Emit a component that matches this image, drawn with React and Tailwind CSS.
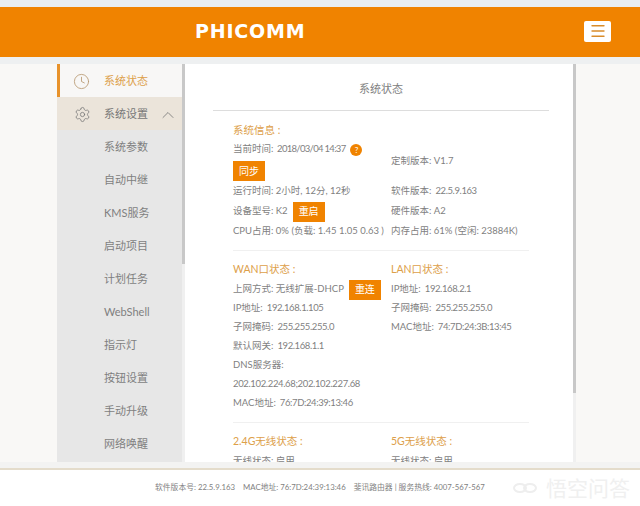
import React from 'react';
import { Clock, Settings, ChevronUp, Menu } from 'lucide-react';

const font = { fontFamily: 'Lato, "Noto Sans CJK SC", sans-serif' };

const subItems = ['系统参数', '自动中继', 'KMS服务', '启动项目', '计划任务', 'WebShell', '指示灯', '按钮设置', '手动升级', '网络唤醒'];

const OrangeButton = ({ label, className = '' }) => (
  <span className={`inline-flex items-center justify-center w-[32px] h-[20px] bg-[#f08300] text-white text-[10px] shrink-0 ${className}`}>{label}</span>
);

const Row = ({ children, className = '' }) => (
  <div className={`h-[19px] flex items-center whitespace-pre ${className}`}>{children}</div>
);

// numbers in the reference run tighter than the labels
const Val = ({ children, className = 'tracking-[-0.4px]' }) => (
  <span className={`ml-[2px] ${className}`}>{children}</span>
);

const Heading = ({ children, className = 'h-[20px]' }) => (
  <div className={`flex items-center text-[10.5px] text-[#dda04a] whitespace-pre ${className}`}>{children}</div>
);

function Sidebar() {
  return (
    <aside className="w-[128px] flex bg-[#e7e7e7] shrink-0">
      <div className="flex-1">
        <div className="h-[33px] pt-[2px] flex items-center bg-[#f8f7f6] border-l-[3px] border-[#e8922a] text-[#dda04a]">
          <Clock className="w-[17px] h-[17px] ml-[13px] text-[#b89a72]" strokeWidth={1.2} />
          <span className="ml-[14px] text-[11px]">系统状态</span>
        </div>
        <div className="h-[33px] pt-[2px] flex items-center bg-[#ebe4da] text-[#777] pl-[17px]">
          <Settings className="w-[17px] h-[17px] text-[#777]" strokeWidth={1.1} />
          <span className="ml-[13px] text-[11px]">系统设置</span>
          <ChevronUp className="w-[20px] h-[20px] ml-[10px] text-[#777]" strokeWidth={1} />
        </div>
        {subItems.map((item) => (
          <div key={item} className="h-[33px] pt-[2px] flex items-center pl-[47px] text-[11px] text-[#7f7f7f]">{item}</div>
        ))}
      </div>
      <div className="w-[3px] bg-[#f0f0f0]">
        <div className="h-[200px] bg-[#c8c8c8]" />
      </div>
    </aside>
  );
}

function Panel() {
  return (
    <main className="w-[391px] flex bg-white overflow-hidden shrink-0">
      <div className="flex-1 overflow-hidden text-[9.5px] text-[#7f7f7f]">
        <div className="h-[47px] ml-[28px] mr-[24px] pt-[5px] border-b border-[#dddddd] flex items-center justify-center text-[11px]">
          系统状态
        </div>
        <div className="pl-[48px] pr-[44px] pt-[10px]">
          {/* 系统信息 */}
          <Heading className="h-[19px]">系统信息 :</Heading>
          <div className="flex">
            <div className="w-[158px]">
              <Row>
                当前时间:<Val className="tracking-[-0.7px]"> 2018/03/04 14:37</Val>
                <span className="ml-[5px] w-[12px] h-[12px] rounded-full bg-[#f08300] text-white text-[8px] flex items-center justify-center">?</span>
              </Row>
              <div className="h-[23px] pt-[2px]"><OrangeButton label="同步" /></div>
            </div>
            <div className="flex items-center h-[42px]">定制版本: V1.7</div>
          </div>
          <div className="flex">
            <Row className="w-[158px]">运行时间: 2小时, 12分, 12秒</Row>
            <Row>软件版本:<Val> 22.5.9.163</Val></Row>
          </div>
          <div className="flex">
            <Row className="w-[158px] h-[21px]">设备型号: K2<OrangeButton label="重启" className="ml-[5px]" /></Row>
            <Row className="h-[21px]">硬件版本: A2</Row>
          </div>
          <div className="flex">
            <Row className="w-[158px]">CPU占用: 0% (负载: 1.45 1.05 0.63 )</Row>
            <Row>内存占用: 61% (空闲: 23884K)</Row>
          </div>

          <div className="border-t border-[#f0f0f0] mt-[9px] mb-[9px]" />

          {/* WAN / LAN */}
          <div className="flex">
            <div className="w-[158px]">
              <Heading>WAN口状态 :</Heading>
              <Row>上网方式: 无线扩展-DHCP<OrangeButton label="重连" className="ml-[5px]" /></Row>
              <Row>IP地址:<Val> 192.168.1.105</Val></Row>
              <Row>子网掩码:<Val> 255.255.255.0</Val></Row>
              <Row>默认网关:<Val> 192.168.1.1</Val></Row>
              <Row>DNS服务器:</Row>
              <Row className="tracking-[-0.35px]">202.102.224.68;202.102.227.68</Row>
              <Row>MAC地址:<Val> 76:7D:24:39:13:46</Val></Row>
            </div>
            <div>
              <Heading>LAN口状态 :</Heading>
              <Row>IP地址:<Val> 192.168.2.1</Val></Row>
              <Row>子网掩码:<Val> 255.255.255.0</Val></Row>
              <Row>MAC地址:<Val> 74:7D:24:3B:13:45</Val></Row>
            </div>
          </div>

          <div className="border-t border-[#f0f0f0] mt-[9px] mb-[9px]" />

          {/* wireless */}
          <div className="flex">
            <div className="w-[158px]">
              <Heading>2.4G无线状态 :</Heading>
              <Row>无线状态: 启用</Row>
            </div>
            <div>
              <Heading>5G无线状态 :</Heading>
              <Row>无线状态: 启用</Row>
            </div>
          </div>
        </div>
      </div>
      <div className="w-[3px] bg-[#f0f0f0] shrink-0">
        <div className="h-[329px] bg-[#c8c8c8]" />
      </div>
    </main>
  );
}

export default function App() {
  return (
    <div className="w-[640px] h-[506px] overflow-hidden flex flex-col bg-[#f9f8f6]" style={font}>
      <div className="h-[7px] bg-[#e9eef1] shrink-0" />
      <header className="h-[50px] bg-[#f08300] shrink-0 flex items-center pl-[195px] pr-[29px] justify-between">
        <span className="text-white font-bold text-[19px] tracking-[0.8px] leading-none mb-[2px]" style={{ fontFamily: '"DejaVu Sans", sans-serif' }}>PHICOMM</span>
        <button className="w-[27px] h-[21px] mb-[2px] bg-white rounded-[2px] flex items-center justify-center">
          <Menu className="w-[18px] h-[18px] text-[#d98c2a]" strokeWidth={1.8} />
        </button>
      </header>
      <div className="h-[7px] bg-[#eef0f1] shrink-0" />
      <div className="h-[398px] shrink-0 flex pl-[57px] overflow-hidden">
        <Sidebar />
        <Panel />
      </div>
      <div className="h-[6px] shrink-0 bg-[#f3f3f2]" />
      <footer className="flex-1 bg-white border-t-2 border-[#e4dccb] flex items-center pl-[155px] pr-[10px] text-[7.8px] text-[#7f7f7f] whitespace-pre">
        <span>软件版本号: 22.5.9.163</span>
        <span className="ml-[8px]">MAC地址: 76:7D:24:39:13:46</span>
        <span className="ml-[8px]">斐讯路由器 | 服务热线: 4007-567-567</span>
        <span className="ml-auto flex items-center gap-[8px] text-[21px] text-[#f0f0f0]">
          <svg width="26" height="14" viewBox="0 0 26 14" fill="none" stroke="#eeeeee" strokeWidth="2">
            <ellipse cx="8" cy="7" rx="6" ry="4" />
            <ellipse cx="18" cy="7" rx="6" ry="4" />
          </svg>
          悟空问答
        </span>
      </footer>
    </div>
  );
}
